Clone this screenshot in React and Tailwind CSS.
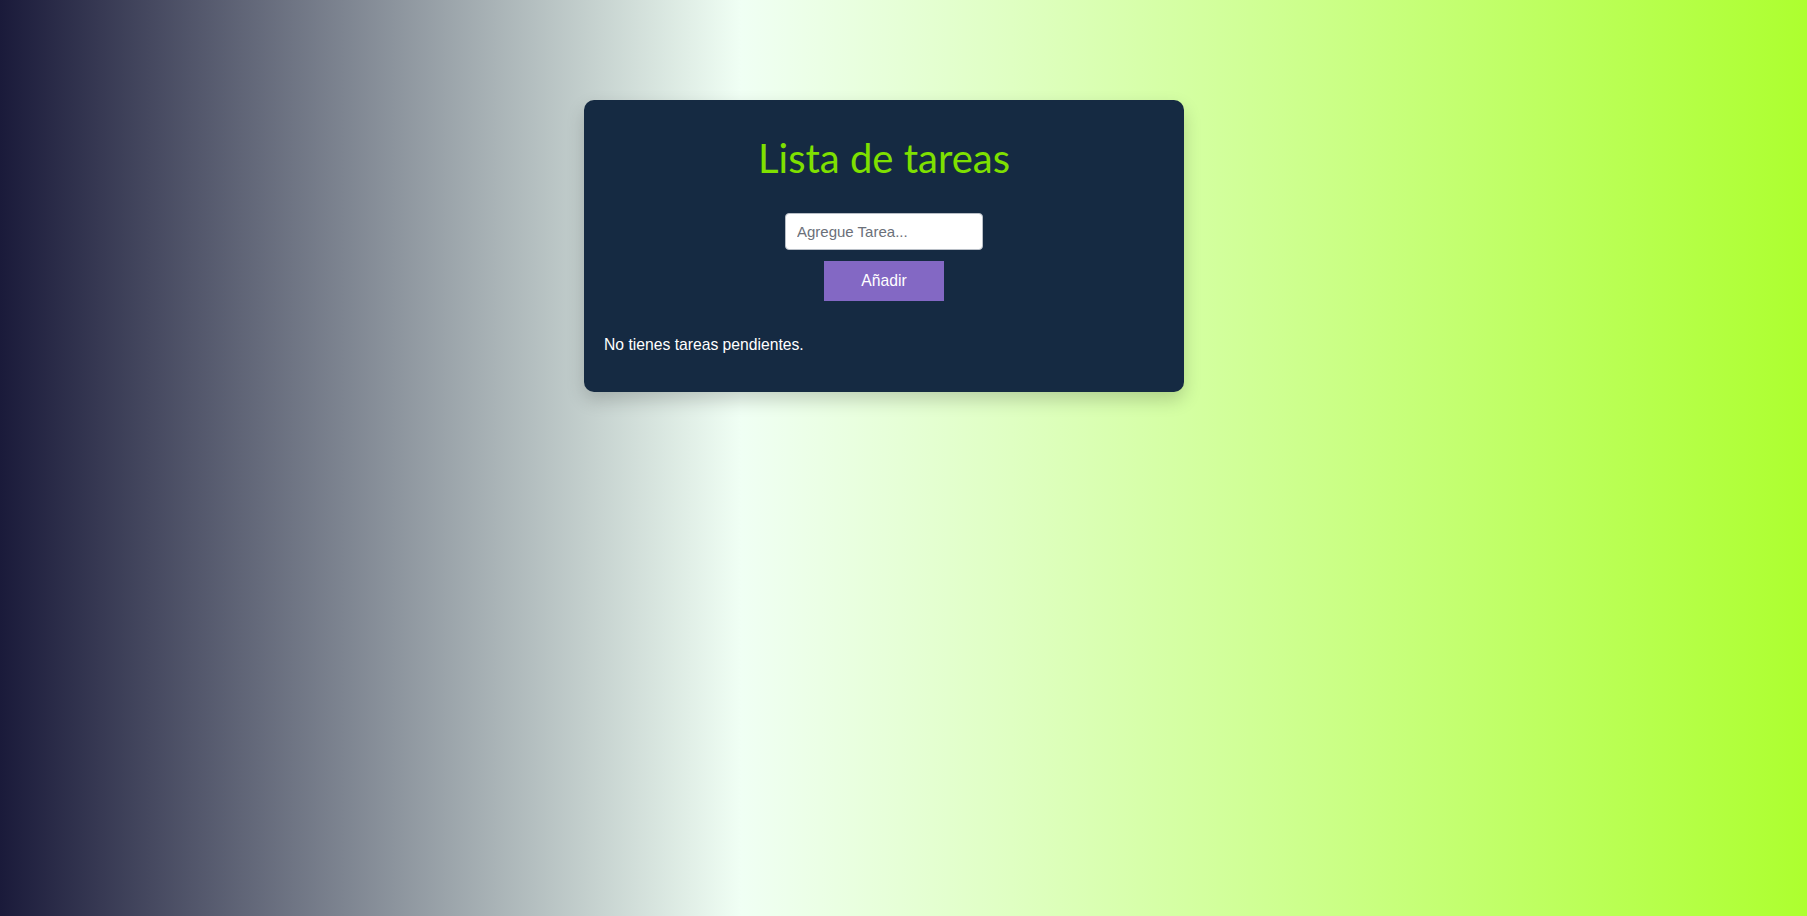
import React, { useState } from "react";

export default function App() {
  const [tasks, setTasks] = useState([]);
  const [text, setText] = useState("");

  const addTask = () => {
    if (!text.trim()) return;
    setTasks([...tasks, text.trim()]);
    setText("");
  };

  return (
    <div className="min-h-screen w-full bg-[linear-gradient(to_right,#1a1a3a_0%,#f0fff4_41%,#adff2f_100%)] font-['Liberation_Sans',Arial,sans-serif]">
      <div className="flex justify-center pt-[100px] pr-[39px]">
        <div className="w-[600px] rounded-[10px] bg-[#152a42] px-5 pt-[34px] pb-[38px] shadow-[0_8px_18px_rgba(0,0,0,0.18)]">
          <h1 className="text-center font-['Lato','Noto_Sans',sans-serif] text-[40px] leading-[48px] text-[#7fe000]">
            Lista de tareas
          </h1>
          <div className="mt-[31px] flex flex-col items-center">
            <input
              type="text"
              value={text}
              onChange={(e) => setText(e.target.value)}
              placeholder="Agregue Tarea..."
              className="h-[37px] w-[198px] rounded-[4px] border border-[#b8bec6] bg-white px-[11px] text-[15px] text-gray-800 placeholder:text-[#6b7079] outline-none"
            />
            <button
              onClick={addTask}
              className="mt-[11px] h-10 w-[120px] bg-[#8368c4] text-[15.7px] text-white"
            >
              Añadir
            </button>
          </div>
          <div className="mt-[35px] text-[15.7px] leading-[18px] text-white">
            {tasks.length === 0 ? (
              <p>No tienes tareas pendientes.</p>
            ) : (
              <ul>
                {tasks.map((t, i) => (
                  <li key={i}>{t}</li>
                ))}
              </ul>
            )}
          </div>
        </div>
      </div>
    </div>
  );
}
